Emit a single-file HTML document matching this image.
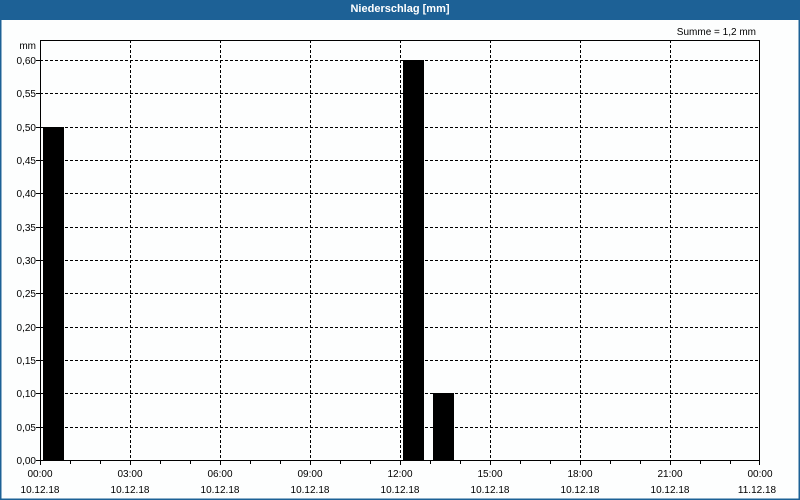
<!DOCTYPE html>
<html><head><meta charset="utf-8"><style>
html,body{margin:0;padding:0;width:800px;height:500px;overflow:hidden;background:#fff}
.hdr{position:absolute;left:0;top:0;width:800px;height:20px;background:#1d6196;color:#fff;font:bold 11px "Liberation Sans",sans-serif;text-align:center;line-height:19px}
svg{position:absolute;left:0;top:0}
text{font-family:"Liberation Sans",sans-serif;font-size:10px;fill:#000}
</style></head><body>
<svg width="800" height="500">
<rect x="0.5" y="0" width="799" height="499.5" fill="#fdfefe" stroke="#1d6196" stroke-width="2"/>
<g stroke="#000" stroke-dasharray="3,2" stroke-width="1">
<line x1="130.5" y1="40" x2="130.5" y2="460"/><line x1="220.5" y1="40" x2="220.5" y2="460"/><line x1="310.5" y1="40" x2="310.5" y2="460"/><line x1="400.5" y1="40" x2="400.5" y2="460"/><line x1="490.5" y1="40" x2="490.5" y2="460"/><line x1="580.5" y1="40" x2="580.5" y2="460"/><line x1="670.5" y1="40" x2="670.5" y2="460"/>
<line x1="40" y1="60.5" x2="760" y2="60.5"/><line x1="40" y1="93.5" x2="760" y2="93.5"/><line x1="40" y1="127.5" x2="760" y2="127.5"/><line x1="40" y1="160.5" x2="760" y2="160.5"/><line x1="40" y1="193.5" x2="760" y2="193.5"/><line x1="40" y1="227.5" x2="760" y2="227.5"/><line x1="40" y1="260.5" x2="760" y2="260.5"/><line x1="40" y1="293.5" x2="760" y2="293.5"/><line x1="40" y1="327.5" x2="760" y2="327.5"/><line x1="40" y1="360.5" x2="760" y2="360.5"/><line x1="40" y1="393.5" x2="760" y2="393.5"/><line x1="40" y1="427.5" x2="760" y2="427.5"/>
</g>
<rect x="43" y="127" width="21" height="333" fill="#000"/>
<rect x="403" y="60" width="21" height="400" fill="#000"/>
<rect x="433" y="393" width="21" height="67" fill="#000"/>
<rect x="40.5" y="40.5" width="719" height="420" fill="none" stroke="#000" stroke-width="1"/>
<g stroke="#000">
<line x1="36" y1="60.5" x2="40" y2="60.5"/><line x1="36" y1="93.5" x2="40" y2="93.5"/><line x1="36" y1="127.5" x2="40" y2="127.5"/><line x1="36" y1="160.5" x2="40" y2="160.5"/><line x1="36" y1="193.5" x2="40" y2="193.5"/><line x1="36" y1="227.5" x2="40" y2="227.5"/><line x1="36" y1="260.5" x2="40" y2="260.5"/><line x1="36" y1="293.5" x2="40" y2="293.5"/><line x1="36" y1="327.5" x2="40" y2="327.5"/><line x1="36" y1="360.5" x2="40" y2="360.5"/><line x1="36" y1="393.5" x2="40" y2="393.5"/><line x1="36" y1="427.5" x2="40" y2="427.5"/><line x1="36" y1="460.5" x2="40" y2="460.5"/>
</g>
<g stroke="#000" id="t"></g>
<g text-anchor="end">
<text x="36" y="49">mm</text>
<text x="36" y="64">0,60</text><text x="36" y="97">0,55</text><text x="36" y="131">0,50</text><text x="36" y="164">0,45</text><text x="36" y="197">0,40</text><text x="36" y="231">0,35</text><text x="36" y="264">0,30</text><text x="36" y="297">0,25</text><text x="36" y="331">0,20</text><text x="36" y="364">0,15</text><text x="36" y="397">0,10</text><text x="36" y="431">0,05</text><text x="36" y="464">0,00</text>
<text x="756" y="35">Summe = 1,2 mm</text>
</g>
<g text-anchor="middle">
<text x="40" y="477">00:00</text><text x="130" y="477">03:00</text><text x="220" y="477">06:00</text><text x="310" y="477">09:00</text><text x="400" y="477">12:00</text><text x="490" y="477">15:00</text><text x="580" y="477">18:00</text><text x="670" y="477">21:00</text><text x="760" y="477">00:00</text>
<text x="40" y="493">10.12.18</text><text x="130" y="493">10.12.18</text><text x="220" y="493">10.12.18</text><text x="310" y="493">10.12.18</text><text x="400" y="493">10.12.18</text><text x="490" y="493">10.12.18</text><text x="580" y="493">10.12.18</text><text x="670" y="493">10.12.18</text><text x="757" y="493">11.12.18</text>
</g>
<path stroke="#000" d="M40.5 460v5M70.5 460v4M100.5 460v4M130.5 460v5M160.5 460v4M190.5 460v4M220.5 460v5M250.5 460v4M280.5 460v4M310.5 460v5M340.5 460v4M370.5 460v4M400.5 460v5M430.5 460v4M460.5 460v4M490.5 460v5M520.5 460v4M550.5 460v4M580.5 460v5M610.5 460v4M640.5 460v4M670.5 460v5M700.5 460v4M730.5 460v4M759.5 460v5"/>
</svg>
<div class="hdr">Niederschlag [mm]</div>
</body></html>
